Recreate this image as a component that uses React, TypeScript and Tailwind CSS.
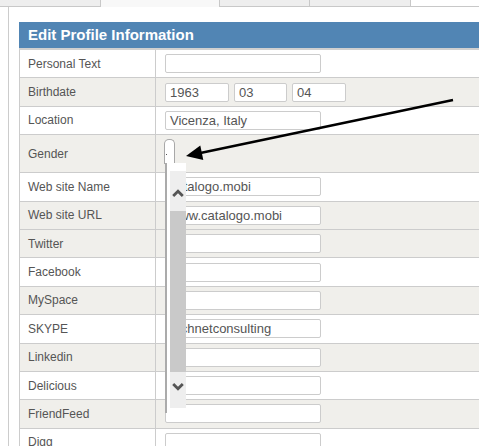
import React from "react";

type Row = {
  label: string;
  shade: boolean;
  kind?: "text" | "date" | "select";
  value?: string;
};

const rows: Row[] = [
  { label: "Personal Text", shade: false, value: "" },
  { label: "Birthdate", shade: true, kind: "date" },
  { label: "Location", shade: false, value: "Vicenza, Italy" },
  { label: "Gender", shade: true, kind: "select" },
  { label: "Web site Name", shade: false, value: "catalogo.mobi" },
  { label: "Web site URL", shade: true, value: "www.catalogo.mobi" },
  { label: "Twitter", shade: true, value: "" },
  { label: "Facebook", shade: false, value: "" },
  { label: "MySpace", shade: true, value: "" },
  { label: "SKYPE", shade: false, value: "technetconsulting" },
  { label: "Linkedin", shade: true, value: "" },
  { label: "Delicious", shade: false, value: "" },
  { label: "FriendFeed", shade: true, value: "" },
  { label: "Digg", shade: false, value: "" },
];

function Field({ value, width }: { value?: string; width: string }) {
  return (
    <div
      className={`${width} h-[19px] shrink-0 overflow-hidden whitespace-nowrap rounded-[2px] border border-[#cccccc] bg-white pl-[4px] pt-[1px] text-[13px] leading-[16px] text-[#555555]`}
    >
      {value}
    </div>
  );
}

function Tabs() {
  return (
    <div className="flex h-[7px]">
      <div className="h-[7px] w-[101px] border-b border-r border-[#c8c8c8] bg-[#eeeeee]" />
      <div className="h-[7px] w-[119px] border-r border-[#c8c8c8] bg-[#f8f8f8]" />
      <div className="h-[7px] w-[90px] border-b border-r border-[#c8c8c8] bg-[#eeeeee]" />
      <div className="h-[7px] w-[101px] border-b border-r border-[#c8c8c8] bg-[#eeeeee]" />
      <div className="h-[7px] flex-1 border-b border-[#c8c8c8] bg-white" />
    </div>
  );
}

function ProfileRow({ row }: { row: Row }) {
  const tall = row.kind === "select";
  return (
    <div
      className={`flex box-border border-b border-[#cccccc] ${
        tall ? "h-[38px]" : "h-[28.4px]"
      } ${row.shade ? "bg-[#f0efeb]" : "bg-white"}`}
    >
      <div className="flex w-[137px] shrink-0 items-center border-l border-r border-[#cccccc] pl-[8px] text-[12px] text-[#555555]">
        {row.label}
      </div>
      <div className="flex flex-1 items-center gap-[5px] pl-[9px]">
        {row.kind === "date" ? (
          <>
            <Field value="1963" width="w-[64px]" />
            <Field value="03" width="w-[53px]" />
            <Field value="04" width="w-[54px]" />
          </>
        ) : row.kind === "select" ? (
          <div className="-ml-[1px] mb-[9px] mt-[4px] h-[25px] w-[11px] rounded-t-[5px] border border-b-0 border-[#a8a8a8] bg-white">
            <div className="ml-[1px] mt-[14px] h-[1px] w-[1px] bg-[#555555]" />
          </div>
        ) : (
          <Field value={row.value} width="w-[156px]" />
        )}
      </div>
    </div>
  );
}

function Chevron({ up }: { up: boolean }) {
  return (
    <svg width="12" height="8" viewBox="0 0 12 8" className="block">
      <path
        d={up ? "M1.2 7 L6 2.2 L10.8 7" : "M1.2 1 L6 5.8 L10.8 1"}
        fill="none"
        stroke="#555555"
        strokeWidth="2.8"
      />
    </svg>
  );
}

export default function App() {
  return (
    <div className="relative h-[446px] w-[479px] overflow-hidden bg-white font-['Liberation_Sans',Arial,sans-serif]">
      <Tabs />
      <div className="ml-[8px] h-[439px] border-l border-[#cccccc] pl-[10px] pt-[15px]">
        <div className="w-[480px]">
          <div className="box-content h-[26px] border-b-2 border-[#d0d0d0] bg-[#5185b4] pl-[9px] text-[15px] font-bold leading-[26px] text-white">
            Edit Profile Information
          </div>
          {rows.map((r) => (
            <ProfileRow key={r.label} row={r} />
          ))}
        </div>
      </div>

      {/* open gender list with its scrollbar */}
      <div className="absolute left-[165px] top-[163px] flex h-[250px] w-[21px] border-l-2 border-[#ababab] bg-white pl-[3px]">
        <div className="mt-[8px] flex h-[237px] w-[16px] flex-col bg-[#eeeeee]">
          <div className="flex h-[40px] items-center justify-center pt-[3px]">
            <Chevron up />
          </div>
          <div className="h-[161px] bg-[#c9c9c9]" />
          <div className="flex h-[36px] items-center justify-center pb-[6px]">
            <Chevron up={false} />
          </div>
        </div>
      </div>

      {/* annotation arrow */}
      <svg
        className="pointer-events-none absolute left-0 top-0"
        width="479"
        height="446"
        viewBox="0 0 479 446"
      >
        <line x1="453" y1="100" x2="198" y2="153.5" stroke="#000" strokeWidth="2.4" />
        <polygon points="186,156 200.3,145.5 203.3,160" fill="#000" />
      </svg>
    </div>
  );
}
